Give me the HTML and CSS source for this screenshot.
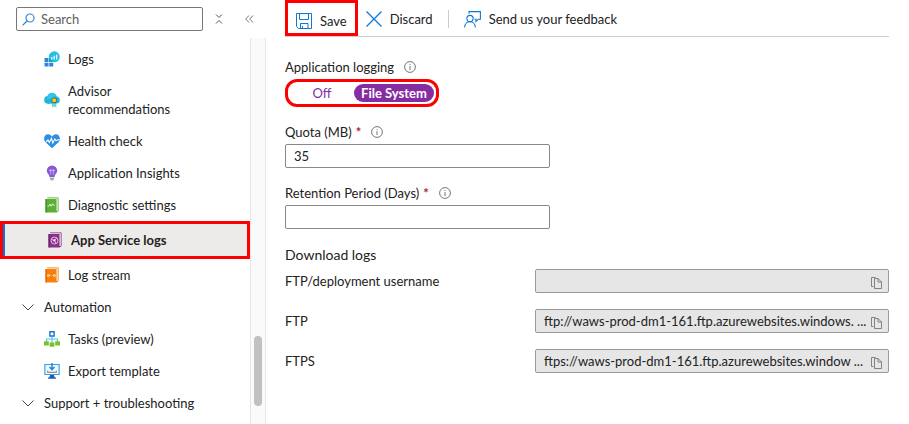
FILE: index.html
```html
<!DOCTYPE html>
<html lang="en">
<head>
<meta charset="utf-8">
<title>App Service logs</title>
<link rel="stylesheet" href="styles.css">
</head>
<body>
<svg class="defs" aria-hidden="true">
  <symbol id="info" viewBox="0 0 12 12"><circle cx="6" cy="6" r="5.4" fill="none" stroke="#666" stroke-width=".9"/><path d="M6 5v4M6 3v1" stroke="#666" stroke-width=".9"/></symbol>
  <symbol id="copy" viewBox="0 0 12 13"><path d="M3.500 10.500H1.500V1.500H5.500M4.500 2.500H8L11.500 6V12.500H4.500ZM8 2.500V6H11.500" fill="none" stroke="#777" stroke-width=".9"/></symbol>
  <symbol id="chevron" viewBox="0 0 12 7"><path d="M.5 .5L6 6L11.500 .5" fill="none" stroke="#444" stroke-width="1"/></symbol>
</svg>
<div class="app">
  <aside class="sidebar">
    <div class="search-row">
      <label class="search">
        <svg width="13" height="13" viewBox="0 0 13 13" aria-hidden="true"><circle cx="8" cy="5" r="4" fill="none" stroke="#2b88d8" stroke-width="1.200"/><path d="M5 8L.6 12.400" stroke="#2b88d8" stroke-width="1.300"/></svg>
        <input type="search" placeholder="Search" aria-label="Search">
      </label>
      <button class="icon-button" aria-label="Collapse groups"><svg width="8" height="10" viewBox="0 0 8 10"><path d="M1 .5L4 3.500L7 .5M1 9.500L4 6.500L7 9.500" fill="none" stroke="#555"/></svg></button>
      <button class="icon-button" aria-label="Hide menu"><svg width="9" height="8" viewBox="0 0 9 8"><path d="M4 .5L.7 4L4 7.500M8 .5L4.700 4L8 7.500" fill="none" stroke="#666" stroke-width=".9"/></svg></button>
    </div>
    <div class="menu-area">
      <nav class="menu">
        <a class="item" href="#logs">
          <svg class="icon" viewBox="0 0 16 16"><path d="M.5 7h4v4h-4zM.5 11.700h4v3.800h-4zM5.200 11.700h4v3.800h-4z" fill="#2f86d8"/><circle cx="10.300" cy="5.800" r="5.500" fill="#26bfe0"/><path d="M5 7v4h4z" fill="#1a9dcc"/><path d="M7.800 6v2.500M10.200 4.800v3.700M12.700 3.500v5" stroke="#fff" stroke-width="1.200"/></svg>
          <span>Logs</span></a>
        <a class="item" href="#advisor">
          <svg class="icon" viewBox="0 0 16 16"><path d="M8 10h4.400v5.500l-2.200-1L8 15.500z" fill="#67dfc5"/><circle cx="4" cy="7.900" r="3.800" fill="#22b4dc"/><circle cx="8" cy="5.800" r="5" fill="#32c5e8"/><circle cx="12.200" cy="8" r="3.600" fill="#22b4dc"/><path d="M4 7h8v4.700H4z" fill="#22b4dc"/><circle cx="10.200" cy="8.300" r="2.800" fill="#3c6068"/><circle cx="10.200" cy="8.300" r="2.100" fill="#ffc914"/></svg>
          <span>Advisor recommendations</span></a>
        <a class="item" href="#health">
          <svg class="icon" viewBox="0 0 16 16"><path d="M8 15.200L1.300 9C-1.500 5.500 1 1.300 4 1.300c2 0 3.200 1 4 2.400 .8-1.400 2-2.400 4-2.400 3 0 5.500 4.200 2.700 7.700z" fill="#2a8fe2"/><path d="M2 9l2-2 1.300 2.500L7.500 5.500l1.300 4.500 2-4 1.200 1.500 3.500-1" fill="none" stroke="#fff" stroke-width="1.100"/></svg>
          <span>Health check</span></a>
        <a class="item" href="#insights">
          <svg class="icon" viewBox="0 0 16 16"><path d="M8 .5a5.200 5.200 0 0 0-5.200 5.200C2.800 8.500 5.400 9 5.400 12h5.200c0-3 2.600-3.500 2.600-6.300A5.200 5.200 0 0 0 8 .5z" fill="#8a58d6"/><path d="M6.700 9.500V4M9.300 9.500V4M5 5.500h6" stroke="#e6d7fa" stroke-width=".6" fill="none"/><path d="M5.800 12.500h4.400v1.300L9 15.500H7l-1.200-1.700z" fill="#a9a9ae"/></svg>
          <span>Application Insights</span></a>
        <a class="item" href="#diagnostic">
          <svg class="icon" viewBox="0 0 16 16"><path d="M3 .5h11.500v13.500L12.500 15.500z" fill="#4f9c2e"/><path d="M3 1.200h10.800v12.800H3z" fill="#e4f3d8"/><path d="M1.500 2h11v13.500h-11z" fill="#5bb034"/><path d="M1.500 2h1.200v13.500H1.500z" fill="#42852a"/><path d="M3.500 9.200h1L6 7.200l1 2L8.500 6.800l.8 1.400h1.500" fill="none" stroke="#fff" stroke-width=".8"/></svg>
          <span>Diagnostic settings</span></a>
        <a class="item selected" href="#app-service-logs" aria-current="page">
          <svg class="icon" viewBox="0 0 16 16"><path d="M3 .5h11.500v13.500L12.500 15.500z" fill="#762878"/><path d="M3 1.200h10.800v12.800H3z" fill="#f0e0f1"/><path d="M1.500 2h11v13.500h-11z" fill="#8a2f8c"/><path d="M1.500 2h1.200v13.500H1.500z" fill="#682069"/><circle cx="7.500" cy="8.500" r="3.500" fill="none" stroke="#e7cbe8" stroke-width=".9"/><path d="M4.500 7.500l3 1 2-2.500M7.500 8.500l1.300 2.700" fill="none" stroke="#e7cbe8" stroke-width=".9"/><circle cx="7.400" cy="8.400" r="1.100" fill="#fff"/></svg>
          <span>App Service logs</span></a>
        <a class="item" href="#stream">
          <svg class="icon" viewBox="0 0 16 16"><path d="M3 .5h11.500v13.500L12.500 15.500z" fill="#e87300"/><path d="M3 1.200h10.800v12.800H3z" fill="#ffead6"/><path d="M1.500 2h11v13.500h-11z" fill="#f98008"/><path d="M1.500 2h1.200v13.500H1.500z" fill="#de6500"/><path d="M4.300 7Q3 8.500 4.300 10.200M10.700 7Q12 8.500 10.700 10.200" fill="none" stroke="#fff" stroke-width=".8"/><circle cx="5.500" cy="8.500" r=".8" fill="#fff"/><circle cx="9.500" cy="8.500" r=".8" fill="#fff"/></svg>
          <span>Log stream</span></a>
        <button class="group" aria-expanded="true"><svg width="12" height="7"><use href="#chevron"/></svg><span>Automation</span></button>
        <a class="item" href="#tasks">
          <svg class="icon" viewBox="0 0 16 16"><path d="M8 5v7M2.500 11V8h11v3" fill="none" stroke="#45c6eb" stroke-width="1.100"/><path d="M5.900 .8h4.200V5H5.900z" fill="#fff" stroke="#1b74cf" stroke-width="1.400"/><path d="M0 10.300h4.800v4.200H0zM5.600 11.500h4.800v4.300H5.600zM11.200 10.300H16v4.200h-4.800z" fill="#78c329"/></svg>
          <span>Tasks (preview)</span></a>
        <a class="item" href="#export">
          <svg class="icon" viewBox="0 0 16 16"><path d="M.9 1.500h14.200v10H.9z" fill="#f3faff" stroke="#3aa0e6" stroke-width="1.200"/><path d="M6 12h4l.7 2.500H12v1.200H4v-1.200h1.300z" fill="#1d5fae"/><path d="M8 0v6M5.500 4L8 6.700L10.500 4" fill="none" stroke="#2388dc" stroke-width="1.500"/><path d="M3.700 7.500v1.900h8.600V7.500" fill="none" stroke="#8c96a0" stroke-width="1.100"/></svg>
          <span>Export template</span></a>
        <button class="group" aria-expanded="true"><svg width="12" height="7"><use href="#chevron"/></svg><span>Support + troubleshooting</span></button>
      </nav>
      <div class="track"><div class="thumb"></div></div>
    </div>
  </aside>

  <main class="content">
    <div class="toolbar">
      <button class="command save"><svg width="16" height="16" viewBox="0 0 16 16"><path d="M.5 .5h15v15H2.500L.5 13.500zM3.500 .5v6h9v-6M4.500 15.500v-5h7.500v5M6.500 15.500v-2.500" fill="none" stroke="#0f78d4" stroke-width="1"/></svg><span>Save</span></button>
      <button class="command discard"><svg width="16" height="16" viewBox="0 0 16 16"><path d="M.5 .5l15 15M15.500 .5l-15 15" stroke="#0f78d4" stroke-width="1.300"/></svg><span>Discard</span></button>
      <span class="divider"></span>
      <button class="command feedback"><svg width="17" height="17" viewBox="0 0 17 17"><path d="M5 2.800V.6h11.400v7.600H14.500L12 10.500V8.200h-1.500" fill="none" stroke="#0f78d4" stroke-width="1.100"/><circle cx="6" cy="7.500" r="3.100" fill="none" stroke="#0f78d4" stroke-width="1.100"/><path d="M.6 16.500c.3-7.800 10.500-7.800 10.800 0" fill="none" stroke="#0f78d4" stroke-width="1.100"/></svg><span>Send us your feedback</span></button>
    </div>

    <form class="settings">
      <fieldset class="field">
        <legend class="label">Application logging <svg class="info"><use href="#info"/></svg></legend>
        <div class="toggle">
          <label><input type="radio" name="logging"><span>Off</span></label>
          <label><input type="radio" name="logging" checked><span>File System</span></label>
        </div>
      </fieldset>
      <div class="field quota">
        <label class="label" for="quota">Quota (MB) <b class="required">*</b> <svg class="info"><use href="#info"/></svg></label>
        <input class="textbox" id="quota" type="text" value="35">
      </div>
      <div class="field retention">
        <label class="label" for="retention">Retention Period (Days) <b class="required">*</b> <svg class="info"><use href="#info"/></svg></label>
        <input class="textbox" id="retention" type="text">
      </div>
      <h2>Download logs</h2>
      <div class="row">
        <label for="username">FTP/deployment username</label>
        <div class="copybox"><input id="username" type="text" readonly><button type="button" aria-label="Copy username"><svg width="12" height="13"><use href="#copy"/></svg></button></div>
      </div>
      <div class="row">
        <label for="ftp">FTP</label>
        <div class="copybox"><input id="ftp" type="text" readonly value="ftp://waws-prod-dm1-161.ftp.azurewebsites.windows. ..."><button type="button" aria-label="Copy FTP address"><svg width="12" height="13"><use href="#copy"/></svg></button></div>
      </div>
      <div class="row">
        <label for="ftps">FTPS</label>
        <div class="copybox"><input id="ftps" type="text" readonly value="ftps://waws-prod-dm1-161.ftp.azurewebsites.window ..."><button type="button" aria-label="Copy FTPS address"><svg width="12" height="13"><use href="#copy"/></svg></button></div>
      </div>
    </form>
  </main>
</div>
</body>
</html>
```
FILE: styles.css
```css
* { box-sizing: border-box; }
body {
  margin: 0;
  background: #fff;
  color: #222;
  font: 13px/18px Lato, "Open Sans", sans-serif;
}
button, input { font: inherit; color: inherit; }
button { border: 0; padding: 0; background: none; }
svg { flex: none; display: block; }
.defs { display: none; }
.app { display: grid; grid-template-columns: 266px minmax(0, 1fr); min-height: 100vh; }

.sidebar { display: flex; flex-direction: column; height: 100vh; overflow: hidden; }
.search-row { display: flex; align-items: center; flex: none; height: 38px; padding-left: 16px; }
.search {
  display: flex;
  align-items: center;
  gap: 6px;
  width: 187px;
  height: 24px;
  padding-left: 5px;
  border: 1px solid #777;
  border-radius: 2px;
}
.search input { width: 100%; min-width: 0; padding: 0; border: 0; outline: 0; background: none; }
.search input::placeholder { color: #605e5c; opacity: 1; }
.icon-button { display: flex; justify-content: center; width: 30px; }
.search + .icon-button { margin-left: 1px; }
.menu-area { display: grid; grid-template-columns: 250px 16px; flex: 1; min-height: 0; }
.menu { padding-top: 5px; min-height: 0; }
.item {
  display: flex;
  align-items: center;
  gap: 8px;
  min-height: 32px;
  padding: 7px 50px 7px 44px;
  color: inherit;
  text-decoration: none;
}
.icon { width: 16px; height: 16px; }
.selected {
  min-height: 38px;
  padding: 7px 20px 7px 44px;
  border: 3px solid #fe0000;
  background: #edebe9;
  box-shadow: inset 2px 0 #0078d4;
  font-weight: 700;
}
.group { display: flex; align-items: center; gap: 10px; width: 100%; height: 32px; padding-left: 22px; text-align: left; }
.track {
  display: flex;
  justify-content: center;
  padding-top: 298px;
  border: solid #e6e6e6;
  border-width: 0 1px;
  background: #fafafa;
}
.thumb { width: 8px; height: 70px; border-radius: 4px; background: #c1c1c1; }

.content { min-width: 0; padding: 0 20px 20px 19px; }
.toolbar { display: flex; height: 37px; border-bottom: 1px solid #ccc; }
.command { display: flex; align-items: center; gap: 8px; height: 38px; }
.save { height: 36px; padding: 6px 8px 0 8px; border: 3px solid #fe0000; }
.discard { padding-left: 8px; }
.divider { width: 1px; height: 18px; margin: 10px 15px 0; background: #ccc; }

.settings { padding-top: 21px; }
.field { margin: 0; padding: 0; border: 0; min-width: 0; }
.label { display: flex; align-items: center; gap: 4px; height: 18px; padding: 0; }
.info { width: 12px; height: 12px; margin-left: 6px; }
.required { color: #a4262c; }
.toggle {
  display: flex;
  width: fit-content;
  margin-top: 3px;
  padding: 2px;
  border: 3px solid #fe0000;
  border-radius: 12px;
  color: #862ca3;
}
.toggle label { display: flex; }
.toggle input { appearance: none; width: 0; height: 0; margin: 0; }
.toggle span { min-width: 64px; padding: 0 7px; border-radius: 9px; text-align: center; }
.toggle :checked + span { min-width: 80px; background: #862ca3; color: #fff; font-weight: 700; }
.quota { margin-top: 16px; }
.retention { margin-top: 16px; }
.textbox { display: block; width: 265px; height: 24px; margin-top: 3px; padding: 0 8px; border: 1px solid #888; border-radius: 2px; }
h2 { margin: 16px 0 4px; font-size: 14px; font-weight: 400; line-height: 20px; }
.row { display: grid; grid-template-columns: 250px minmax(0, 1fr); align-items: center; height: 24px; }
.row + .row { margin-top: 16px; }
.copybox { display: flex; align-items: center; height: 24px; padding: 0 6px 0 8px; border: 1px solid #999; border-radius: 2px; background: #e6e6e6; }
.copybox input { flex: 1; min-width: 0; padding: 0; border: 0; outline: 0; background: none; }
.copybox button { padding-top: 3px; }
```
